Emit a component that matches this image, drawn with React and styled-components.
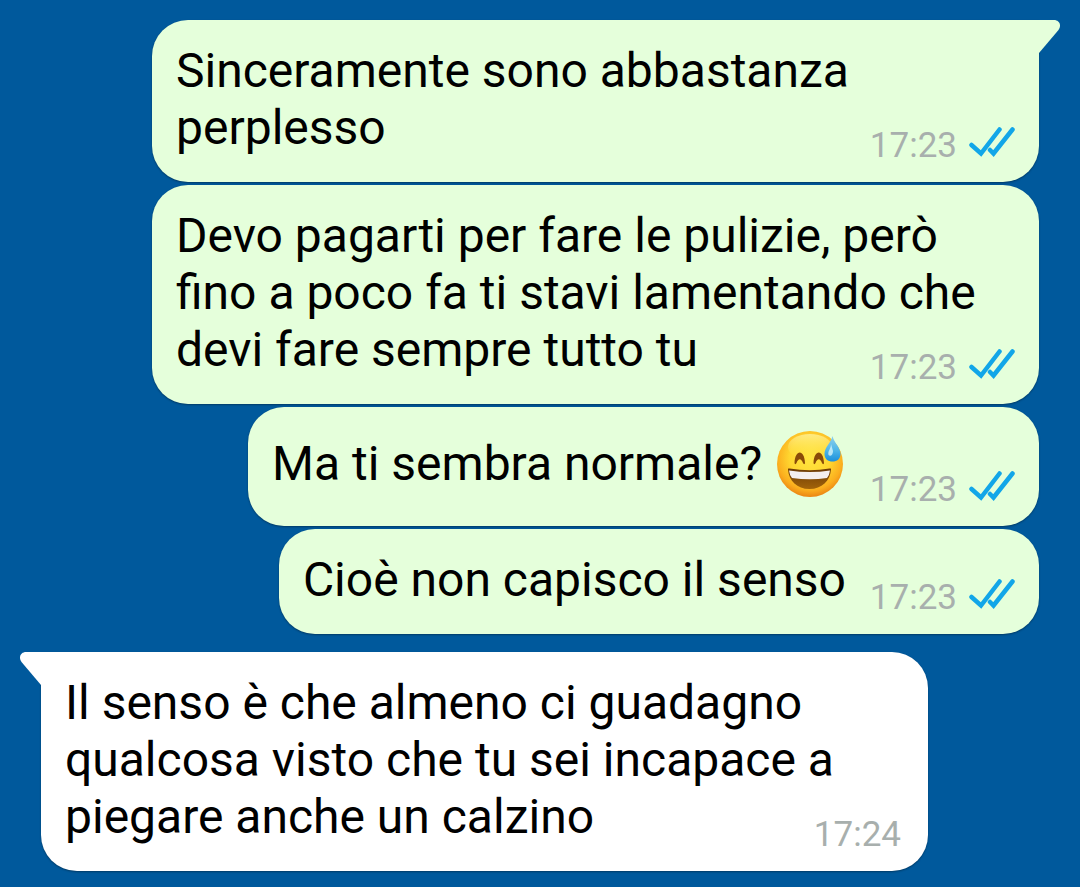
import React from 'react';
import styled, { createGlobalStyle } from 'styled-components';

const GlobalStyle = createGlobalStyle`
  * {
    box-sizing: border-box;
  }

  body {
    margin: 0;
    background: #00599c;
    font-family: Roboto, sans-serif;
  }
`;

const Chat = styled.main`
  display: flex;
  flex-direction: column;
  padding: 20px 41px 16px;
`;

const Group = styled.section`
  display: flex;
  flex-direction: column;
  align-items: ${props => (props.$own ? 'flex-end' : 'flex-start')};
  gap: 3px;

  & + & {
    margin-top: 18px;
  }
`;

const Bubble = styled.article`
  position: relative;
  display: flex;
  flex-direction: column;
  max-width: calc(100% - 111px);
  padding: 22px 24px 15px;
  border-radius: 36px;
  border-top-right-radius: ${props => (props.$own && props.$tail ? '0' : '36px')};
  border-top-left-radius: ${props => (!props.$own && props.$tail ? '0' : '36px')};
  background: ${props => (props.$own ? '#e5ffdb' : '#ffffff')};
  box-shadow: 0 1px 2px rgba(0, 0, 0, 0.35);
`;

const Tail = styled.svg`
  position: absolute;
  top: 0;
  ${props => (props.$own ? 'left: 100%;' : 'right: 100%;')}
  width: 21px;
  height: 34px;
  fill: ${props => (props.$own ? '#e5ffdb' : '#ffffff')};
  transform: ${props => (props.$own ? 'none' : 'scaleX(-1)')};
`;

const Text = styled.p`
  margin: 0;
  color: #000;
  font-size: 48px;
  line-height: 57px;
`;

// keeps the end of the last line free for the time
const Spacer = styled.span`
  display: inline-block;
  width: ${props => (props.$own ? '169px' : '112px')};
`;

const Meta = styled.div`
  display: flex;
  justify-content: flex-end;
  align-items: baseline;
  gap: 10px;
  height: 42px;
  margin-top: -31px;
  padding-right: ${props => (props.$own ? '0' : '3px')};
  color: #a8afad;
  font-size: 35px;
  line-height: 42px;
`;

const Ticks = styled.svg`
  width: 48px;
  height: 32px;
  fill: none;
  stroke: #12a6e8;
  stroke-width: 4.5;
  stroke-linecap: round;
`;

const Emoji = styled.svg`
  width: 66px;
  height: 66px;
  margin: 2px 3px 3px;
  vertical-align: -20px;
`;

const SweatSmile = () => (
  <Emoji viewBox="0 0 66 66" role="img" aria-label="😅">
    <defs>
      <radialGradient id="face" cx="0.5" cy="0.4" r="0.62">
        <stop offset="0" stopColor="#ffe640" />
        <stop offset="0.5" stopColor="#ffd630" />
        <stop offset="0.8" stopColor="#fbae1e" />
        <stop offset="1" stopColor="#e87d10" />
      </radialGradient>
      <linearGradient id="shine" x1="0" y1="0" x2="0" y2="1">
        <stop offset="0" stopColor="#fff6a8" stopOpacity="0.7" />
        <stop offset="1" stopColor="#ffe94a" stopOpacity="0" />
      </linearGradient>
      <linearGradient id="mouth" x1="0" y1="0" x2="0" y2="1">
        <stop offset="0" stopColor="#6b3a06" />
        <stop offset="1" stopColor="#a3640a" />
      </linearGradient>
      <linearGradient id="drop" x1="0" y1="0" x2="0" y2="1">
        <stop offset="0" stopColor="#8fd0ec" />
        <stop offset="0.55" stopColor="#4fb6e8" />
        <stop offset="1" stopColor="#1b8fdc" />
      </linearGradient>
    </defs>
    <circle cx="33" cy="33" r="33" fill="url(#face)" />
    <ellipse cx="33" cy="16" rx="22" ry="13" fill="url(#shine)" />
    <path d="M17.500 32C18 18 27.500 18 28 32C28 33.500 26.500 33.500 26 32C24 27 21.500 27 19.500 32C19 33.500 17.500 33.500 17.500 32Z" fill="#8a4b08" />
    <path d="M36.500 32C37 18 46.500 18 47 32C47 33.500 45.500 33.500 45 32C43 27 40.500 27 38.500 32C38 33.500 36.500 33.500 36.500 32Z" fill="#8a4b08" />
    <path d="M11 38.500Q10.500 37 12.500 37.500Q33 41 52.500 37.500Q54.500 37 54 38.500C53 50 45 58 32.500 58C20 58 12 50 11 38.500Z" fill="url(#mouth)" />
    <path d="M12 39.500Q33 42.500 53 39.500Q52.500 44 50 47Q33 49.500 15 47Q12.500 44 12 39.500Z" fill="#f4efee" />
    <path d="M55.500 5C57 12 63.500 16 63.500 23C63.500 28 60 30.500 55.500 30.500C51 30.500 47.500 28 47.500 23C47.500 16 54 12 55.500 5Z" fill="url(#drop)" />
    <path d="M54 13C54 18 50.500 20 51.500 24C53.500 26 56 24 56 20Z" fill="#d5f2fa" opacity="0.8" />
  </Emoji>
);

const messages = [
  { own: true, tail: true, time: '17:23', text: 'Sinceramente sono abbastanza perplesso' },
  {
    own: true,
    time: '17:23',
    text: 'Devo pagarti per fare le pulizie, però fino a poco fa ti stavi lamentando che devi fare sempre tutto tu',
  },
  { own: true, time: '17:23', text: 'Ma ti sembra normale? ', emoji: true },
  { own: true, time: '17:23', text: 'Cioè non capisco il senso' },
];

const replies = [
  {
    own: false,
    tail: true,
    time: '17:24',
    text: 'Il senso è che almeno ci guadagno qualcosa visto che tu sei incapace a piegare anche un calzino',
  },
];

const Message = ({ own, tail, time, text, emoji }) => (
  <Bubble $own={own} $tail={tail}>
    {tail && (
      <Tail $own={own} viewBox="0 0 21 34" aria-hidden="true">
        <path d="M-1 0H15C20 0 23 5 19.500 10L0 33H-1Z" />
      </Tail>
    )}
    <Text>
      {text}
      {emoji && <SweatSmile />}
      <Spacer $own={own} />
    </Text>
    <Meta $own={own}>
      <time>{time}</time>
      {own && (
        <Ticks viewBox="0 0 48 32" aria-hidden="true">
          <path d="M4.500 20L14 28.500L32.500 4.500M23 25L26.500 28.500L45.500 4.500" />
        </Ticks>
      )}
    </Meta>
  </Bubble>
);

const App = () => {
  return (
    <>
      <GlobalStyle />
      <Chat>
        <Group $own>
          {messages.map((message, i) => (
            <Message key={i} {...message} />
          ))}
        </Group>
        <Group>
          {replies.map((message, i) => (
            <Message key={i} {...message} />
          ))}
        </Group>
      </Chat>
    </>
  );
};

export default App;
